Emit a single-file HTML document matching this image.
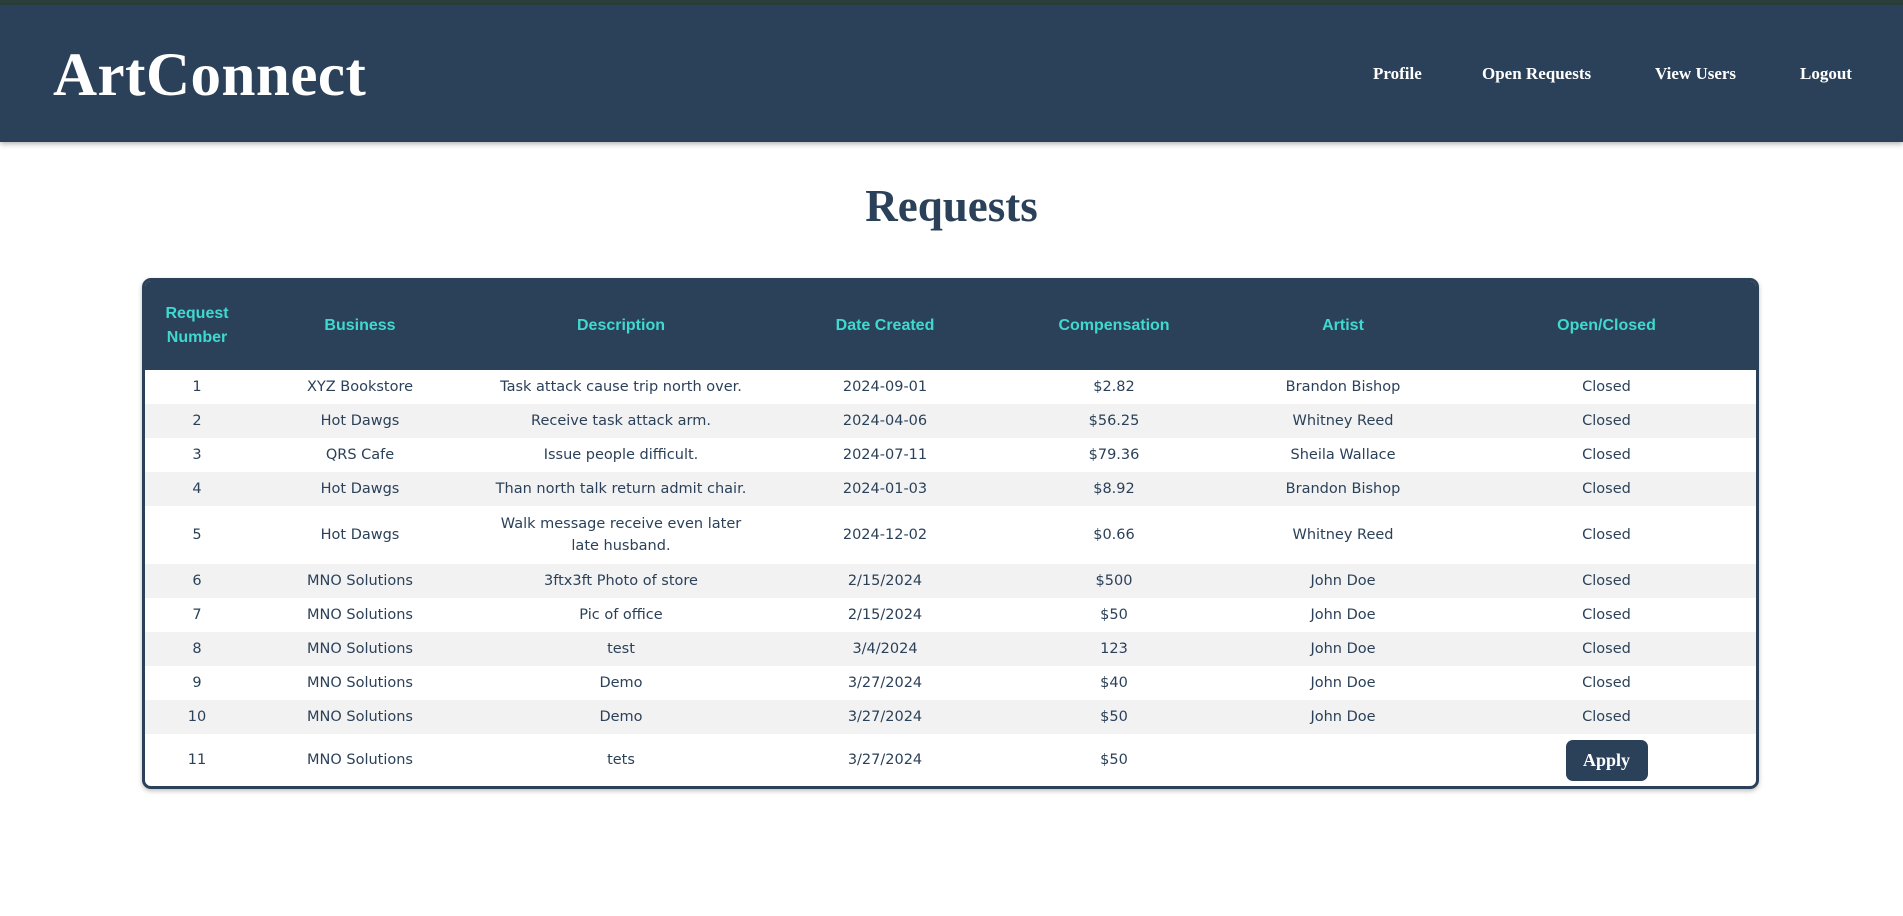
<!DOCTYPE html>
<html><head><meta charset="utf-8"><style>
*{box-sizing:border-box;margin:0;padding:0}
body{width:1903px;height:916px;background:#fff;font-family:"DejaVu Sans","Liberation Sans",sans-serif;overflow:hidden;position:relative}
.topline{position:absolute;left:0;top:0;width:1903px;height:5px;background:#2a3f3c}
header{position:absolute;left:0;top:5px;width:1903px;height:137px;background:#2b4159;box-shadow:0 2px 5px rgba(0,0,0,.3)}
.logo{position:absolute;left:53px;top:36px;font-family:"Liberation Serif",serif;font-weight:bold;font-size:61px;color:#fff;letter-spacing:0.5px}
nav a{position:absolute;top:59px;color:#fff;font-family:"Liberation Serif",serif;font-weight:bold;font-size:17px;text-decoration:none}
h1{position:absolute;left:0;width:1903px;top:180px;text-align:center;font-family:"Liberation Serif",serif;font-weight:bold;font-size:45px;color:#2b4159}
.tbl{position:absolute;left:142px;top:278px;width:1617px;border:3px solid #2b4159;border-radius:9px;overflow:hidden;box-shadow:0 2px 5px rgba(0,0,0,.25);background:#fff}
table{border-collapse:collapse;width:1611px;table-layout:fixed}
th{background:#2b4159;color:#3fd9d0;font-family:"Liberation Sans",Arial,sans-serif;font-weight:bold;font-size:16px;height:89px;line-height:24px;text-align:center;vertical-align:middle}
td{text-align:center;color:#2b4159;font-size:14.5px;height:34px;vertical-align:middle;line-height:22px;padding:0 8px}
td.d{padding:0 28px}
tr.s td{background:#f2f2f2}
.btn{display:inline-block;width:82px;height:41px;line-height:41px;background:#2b4159;color:#fff;border-radius:7px;font-family:"Liberation Serif",serif;font-weight:bold;font-size:18px;vertical-align:middle}
</style></head><body>
<div class="topline"></div>
<header><div class="logo">ArtConnect</div>
<nav><a style="left:1373px">Profile</a><a style="left:1482px">Open Requests</a><a style="left:1655px">View Users</a><a style="left:1800px">Logout</a></nav></header>
<h1>Requests</h1>
<div class="tbl"><table>
<colgroup><col style="width:104px"><col style="width:222px"><col style="width:300px"><col style="width:228px"><col style="width:230px"><col style="width:228px"><col style="width:299px"></colgroup>
<tr><th>Request<br>Number</th><th>Business</th><th>Description</th><th>Date Created</th><th>Compensation</th><th>Artist</th><th>Open/Closed</th></tr>
<tr><td>1</td><td>XYZ Bookstore</td><td>Task attack cause trip north over.</td><td>2024-09-01</td><td>$2.82</td><td>Brandon Bishop</td><td>Closed</td></tr>
<tr class="s"><td>2</td><td>Hot Dawgs</td><td>Receive task attack arm.</td><td>2024-04-06</td><td>$56.25</td><td>Whitney Reed</td><td>Closed</td></tr>
<tr><td>3</td><td>QRS Cafe</td><td>Issue people difficult.</td><td>2024-07-11</td><td>$79.36</td><td>Sheila Wallace</td><td>Closed</td></tr>
<tr class="s"><td>4</td><td>Hot Dawgs</td><td>Than north talk return admit chair.</td><td>2024-01-03</td><td>$8.92</td><td>Brandon Bishop</td><td>Closed</td></tr>
<tr><td style="height:58px">5</td><td>Hot Dawgs</td><td class="d">Walk message receive even later late husband.</td><td>2024-12-02</td><td>$0.66</td><td>Whitney Reed</td><td>Closed</td></tr>
<tr class="s"><td>6</td><td>MNO Solutions</td><td>3ftx3ft Photo of store</td><td>2/15/2024</td><td>$500</td><td>John Doe</td><td>Closed</td></tr>
<tr><td>7</td><td>MNO Solutions</td><td>Pic of office</td><td>2/15/2024</td><td>$50</td><td>John Doe</td><td>Closed</td></tr>
<tr class="s"><td>8</td><td>MNO Solutions</td><td>test</td><td>3/4/2024</td><td>123</td><td>John Doe</td><td>Closed</td></tr>
<tr><td>9</td><td>MNO Solutions</td><td>Demo</td><td>3/27/2024</td><td>$40</td><td>John Doe</td><td>Closed</td></tr>
<tr class="s"><td>10</td><td>MNO Solutions</td><td>Demo</td><td>3/27/2024</td><td>$50</td><td>John Doe</td><td>Closed</td></tr>
<tr><td style="height:52px">11</td><td>MNO Solutions</td><td>tets</td><td>3/27/2024</td><td>$50</td><td></td><td><span class="btn">Apply</span></td></tr>
</table></div>
</body></html>
